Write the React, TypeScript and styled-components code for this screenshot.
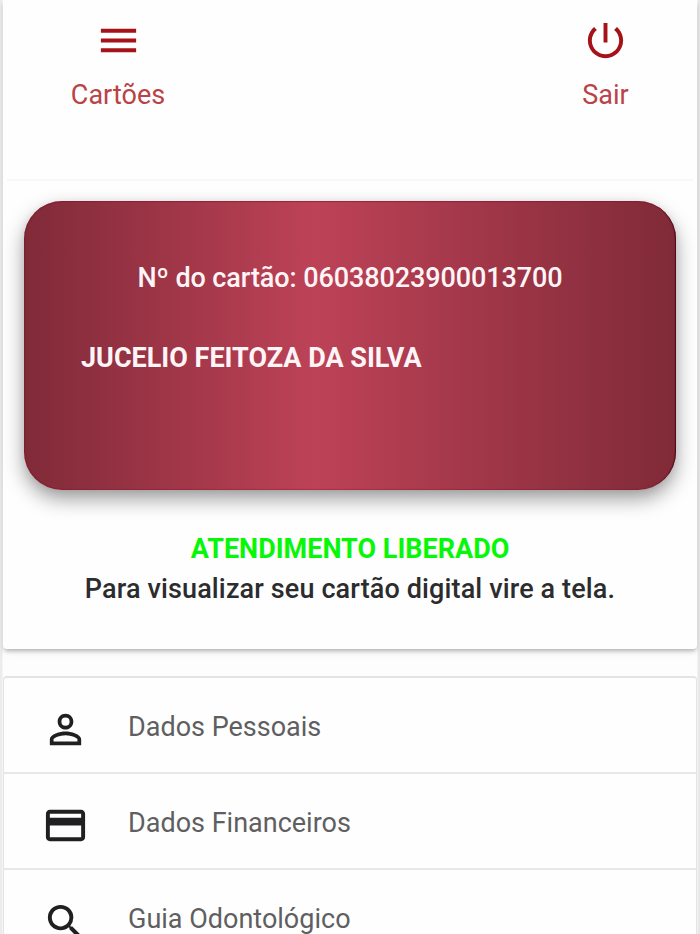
import React from "react";
import styled, { createGlobalStyle } from "styled-components";

const GlobalStyle = createGlobalStyle`
  * { box-sizing: border-box; }
  html, body { margin: 0; padding: 0; }
  body {
    background: #fdfdfd;
    font-family: Roboto, "Liberation Sans", sans-serif;
    overflow: hidden;
  }
`;

const Screen = styled.main`
  display: flex;
  flex-direction: column;
  width: 700px;
  height: 934px;
  overflow: hidden;
  padding: 0 3px;
  background: linear-gradient(90deg, #ececec 0 2px, #fdfdfd 3px 697px, #e8e8e8 698px);
`;

const Panel = styled.section`
  display: flex;
  flex-direction: column;
  flex: none;
  height: 649px;
  background: #fefefe;
  border-radius: 0 0 4px 4px;
  box-shadow: 0 3px 4px -1px rgba(0, 0, 0, 0.27), 0 4px 10px rgba(0, 0, 0, 0.05);
`;

const Toolbar = styled.header`
  display: flex;
  justify-content: space-between;
  flex: none;
  height: 181px;
  margin: 0 4px;
  padding: 16.5px 30px 0;
  border-bottom: 2px solid #f8f8f8;
`;

const ToolButton = styled.button<{ $width: number }>`
  display: flex;
  flex-direction: column;
  align-items: center;
  width: ${(p) => p.$width}px;
  height: 96px;
  padding: 0;
  border: 0;
  background: none;
  color: #a51318;
  font-family: inherit;
`;

const Icon = styled.svg`
  display: block;
  flex: none;
  width: 47px;
  height: 47px;
  fill: currentColor;
`;

const ToolLabel = styled.span`
  margin-top: 15.5px;
  font-size: 27px;
  line-height: 32px;
  color: #b94347;
`;

const MemberCard = styled.article`
  display: flex;
  flex-direction: column;
  flex: none;
  height: 289px;
  margin: 20px 21px 0;
  padding-top: 61px;
  border-radius: 38px;
  color: #fff5f6;
  background: linear-gradient(90deg, #802a38 0%, #bd4257 44.5%, #802a38 100%);
  box-shadow: 0 9px 20px rgba(0, 0, 0, 0.38), 0 2px 8px rgba(0, 0, 0, 0.06),
    inset -2px 0 1px -1px #4d0815, inset 0 2px 1px -1px rgba(145, 12, 38, 0.55),
    inset 0 -1px 1px rgba(145, 12, 38, 0.3), inset 1px 0 1px rgba(120, 12, 32, 0.4);
`;

const CardNumber = styled.div`
  font-size: 27px;
  line-height: 32px;
  font-weight: 500;
  text-align: center;
  white-space: nowrap;
  letter-spacing: -0.09px;
`;

const HolderName = styled.div`
  margin: 48px 0 0 57px;
  font-size: 27px;
  line-height: 32px;
  font-weight: 700;
  white-space: nowrap;
`;

const Status = styled.div`
  margin-top: 43px;
  font-size: 27px;
  line-height: 32px;
  font-weight: 700;
  text-align: center;
  color: #06f806;
`;

const Hint = styled.div`
  margin-top: 8px;
  font-size: 27px;
  line-height: 32px;
  font-weight: 500;
  letter-spacing: 0.13px;
  text-align: center;
  color: #2c2c2e;
`;

const Menu = styled.nav`
  flex: none;
  margin: 26.5px 0 0;
  border: 2px solid #e4e4e4;
  border-width: 2px 1px 0;
  border-radius: 4px 4px 0 0;
  background: #fefefe;
`;

const MenuRow = styled.a`
  display: flex;
  height: 96.7px;
  padding: 28.5px 0 0 38px;
  border-bottom: 2px solid #e8e8e8;
  color: #202022;

  &:first-child {
    height: 96px;
  }
`;

const MenuLabel = styled.span`
  margin: 4.5px 0 0 39px;
  font-size: 27px;
  line-height: 32px;
  color: #5f5f61;
`;

const paths = {
  menu: "M3 18h18v-2H3v2zm0-5h18v-2H3v2zm0-7v2h18V6H3z",
  power:
    "M13 3h-2v10h2V3zm4.83 2.17-1.42 1.42C17.99 7.86 19 9.81 19 12c0 3.87-3.13 7-7 7s-7-3.13-7-7c0-2.19 1.01-4.14 2.58-5.42L6.17 5.17C4.23 6.82 3 9.26 3 12c0 4.97 4.03 9 9 9s9-4.03 9-9c0-2.74-1.23-5.18-3.17-6.83z",
  person:
    "M12 5.9a2.1 2.1 0 1 1 0 4.2 2.1 2.1 0 0 1 0-4.2m0 9c2.97 0 6.1 1.46 6.1 2.1v1.1H5.9V17c0-.64 3.13-2.1 6.1-2.1M12 4C9.79 4 8 5.79 8 8s1.79 4 4 4 4-1.79 4-4-1.79-4-4-4zm0 9c-2.67 0-8 1.34-8 4v3h16v-3c0-2.66-5.33-4-8-4z",
  card:
    "M20 4H4c-1.11 0-1.99.89-1.99 2L2 18c0 1.11.89 2 2 2h16c1.11 0 2-.89 2-2V6c0-1.11-.89-2-2-2zm0 14H4v-6h16v6zm0-10H4V6h16v2z",
  search:
    "M15.5 14h-.79l-.28-.27A6.471 6.471 0 0 0 16 9.5 6.5 6.5 0 1 0 9.5 16c1.61 0 3.09-.59 4.23-1.57l.27.28v.79l5 4.99L20.49 19l-4.99-5zm-6 0C7.01 14 5 11.99 5 9.5S7.01 5 9.5 5 14 7.01 14 9.5 11.99 14 9.5 14z",
};

function Glyph({ name }: { name: keyof typeof paths }) {
  return (
    <Icon viewBox="0 0 24 24" aria-hidden="true">
      <path d={paths[name]} />
    </Icon>
  );
}

const items: { icon: keyof typeof paths; label: string }[] = [
  { icon: "person", label: "Dados Pessoais" },
  { icon: "card", label: "Dados Financeiros" },
  { icon: "search", label: "Guia Odontológico" },
];

export default function App() {
  return (
    <>
      <GlobalStyle />
      <Screen>
        <Panel>
          <Toolbar>
            <ToolButton $width={162}>
              <Glyph name="menu" />
              <ToolLabel>Cartões</ToolLabel>
            </ToolButton>
            <ToolButton $width={115}>
              <Glyph name="power" />
              <ToolLabel>Sair</ToolLabel>
            </ToolButton>
          </Toolbar>
          <MemberCard>
            <CardNumber>Nº do cartão: 06038023900013700</CardNumber>
            <HolderName>JUCELIO FEITOZA DA SILVA</HolderName>
          </MemberCard>
          <Status>ATENDIMENTO LIBERADO</Status>
          <Hint>Para visualizar seu cartão digital vire a tela.</Hint>
        </Panel>
        <Menu>
          {items.map((item) => (
            <MenuRow key={item.label}>
              <Glyph name={item.icon} />
              <MenuLabel>{item.label}</MenuLabel>
            </MenuRow>
          ))}
        </Menu>
      </Screen>
    </>
  );
}
